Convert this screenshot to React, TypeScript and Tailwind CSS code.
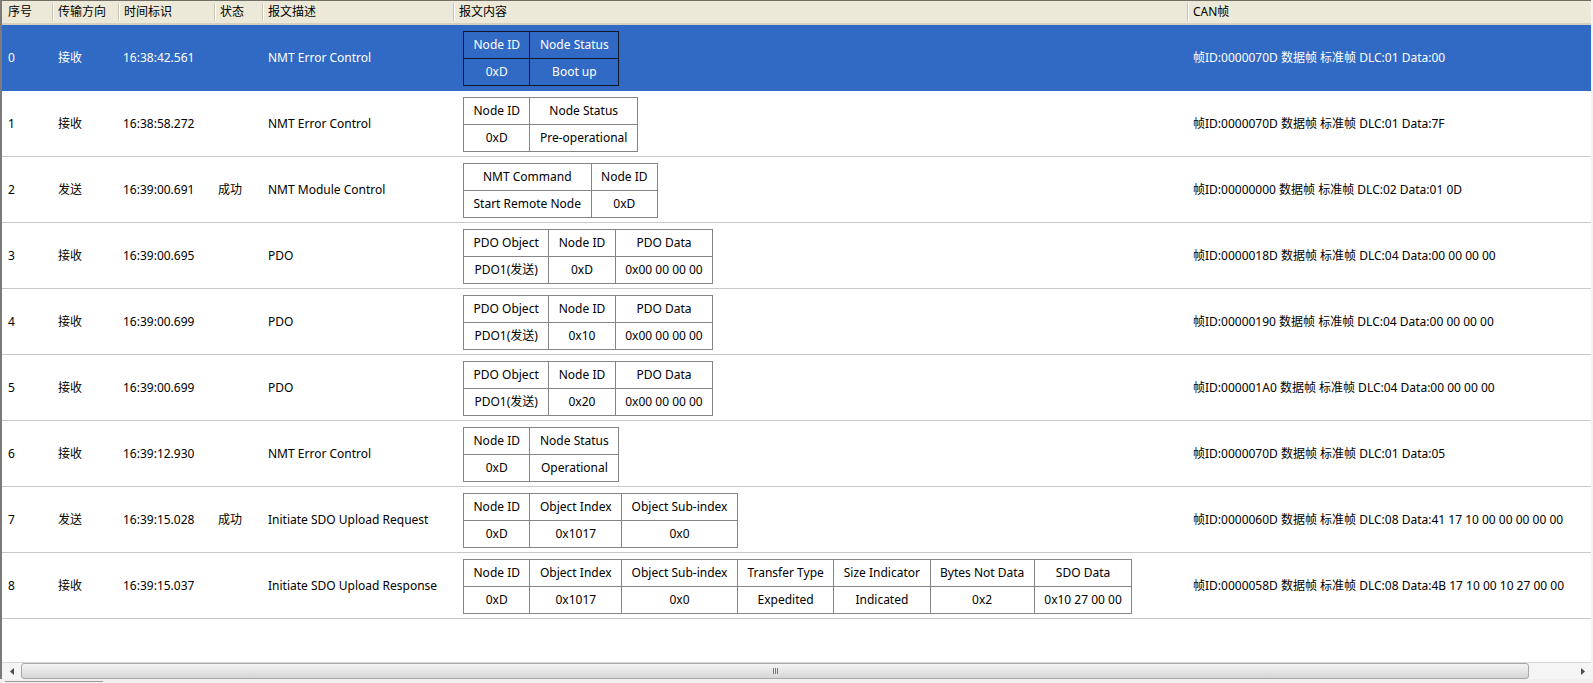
import clsx from 'clsx';

type Row = {
  id: string;
  dir: string;
  time: string;
  status: string;
  desc: string;
  head: string[];
  vals: string[];
  can: string;
};

const rows: Row[] = [
  { id: '0', dir: '接收', time: '16:38:42.561', status: '', desc: 'NMT Error Control', head: ['Node ID', 'Node Status'], vals: ['0xD', 'Boot up'], can: '帧ID:0000070D 数据帧 标准帧 DLC:01 Data:00' },
  { id: '1', dir: '接收', time: '16:38:58.272', status: '', desc: 'NMT Error Control', head: ['Node ID', 'Node Status'], vals: ['0xD', 'Pre-operational'], can: '帧ID:0000070D 数据帧 标准帧 DLC:01 Data:7F' },
  { id: '2', dir: '发送', time: '16:39:00.691', status: '成功', desc: 'NMT Module Control', head: ['NMT Command', 'Node ID'], vals: ['Start Remote Node', '0xD'], can: '帧ID:00000000 数据帧 标准帧 DLC:02 Data:01 0D' },
  { id: '3', dir: '接收', time: '16:39:00.695', status: '', desc: 'PDO', head: ['PDO Object', 'Node ID', 'PDO Data'], vals: ['PDO1(发送)', '0xD', '0x00 00 00 00'], can: '帧ID:0000018D 数据帧 标准帧 DLC:04 Data:00 00 00 00' },
  { id: '4', dir: '接收', time: '16:39:00.699', status: '', desc: 'PDO', head: ['PDO Object', 'Node ID', 'PDO Data'], vals: ['PDO1(发送)', '0x10', '0x00 00 00 00'], can: '帧ID:00000190 数据帧 标准帧 DLC:04 Data:00 00 00 00' },
  { id: '5', dir: '接收', time: '16:39:00.699', status: '', desc: 'PDO', head: ['PDO Object', 'Node ID', 'PDO Data'], vals: ['PDO1(发送)', '0x20', '0x00 00 00 00'], can: '帧ID:000001A0 数据帧 标准帧 DLC:04 Data:00 00 00 00' },
  { id: '6', dir: '接收', time: '16:39:12.930', status: '', desc: 'NMT Error Control', head: ['Node ID', 'Node Status'], vals: ['0xD', 'Operational'], can: '帧ID:0000070D 数据帧 标准帧 DLC:01 Data:05' },
  { id: '7', dir: '发送', time: '16:39:15.028', status: '成功', desc: 'Initiate SDO Upload Request', head: ['Node ID', 'Object Index', 'Object Sub-index'], vals: ['0xD', '0x1017', '0x0'], can: '帧ID:0000060D 数据帧 标准帧 DLC:08 Data:41 17 10 00 00 00 00 00' },
  {
    id: '8', dir: '接收', time: '16:39:15.037', status: '', desc: 'Initiate SDO Upload Response',
    head: ['Node ID', 'Object Index', 'Object Sub-index', 'Transfer Type', 'Size Indicator', 'Bytes Not Data', 'SDO Data'],
    vals: ['0xD', '0x1017', '0x0', 'Expedited', 'Indicated', '0x2', '0x10 27 00 00'],
    can: '帧ID:0000058D 数据帧 标准帧 DLC:08 Data:4B 17 10 00 10 27 00 00',
  },
];

const headers = ['序号', '传输方向', '时间标识', '状态', '报文描述', '报文内容', 'CAN帧'];

const cols = 'grid grid-cols-[50px_66px_96px_48px_191px_734px_1fr]';

function Detail({ head, vals, selected }: { head: string[]; vals: string[]; selected: boolean }) {
  const cell = clsx('px-[9.5px] flex items-center justify-center whitespace-nowrap', selected ? 'bg-[#316AC5]' : 'bg-white');
  return (
    <div
      className={clsx(
        'inline-grid grid-flow-col grid-rows-[26px_26px] auto-cols-max gap-px border',
        selected ? 'bg-[#101828] border-[#101828]' : 'bg-[#858585] border-[#858585]'
      )}
    >
      {head.map((h, i) => [
        <div key={`h${i}`} className={cell}>
          {h}
        </div>,
        <div key={`v${i}`} className={cell}>
          {vals[i]}
        </div>,
      ])}
    </div>
  );
}

export default function App() {
  return (
    <div className="w-[1593px] h-[683px] overflow-hidden bg-[#F0F0F0] flex flex-col font-['Noto_Sans','Noto_Sans_CJK_SC',sans-serif] text-[12px] text-black">
      <div className="flex-1 flex flex-col border-l-2 border-[#7A7A7A] border-r-2 border-r-[#F4F4F4] bg-white min-h-0">
        {/* header */}
        <div className={clsx(cols, 'h-[25px] shrink-0 bg-[#ECE9D8] border-t border-[#716F64] border-b-2 border-b-[#D4D0C0]')}>
          {headers.map((h, i) => (
            <div key={h} className="flex items-center min-w-0">
              {i > 0 && (
                <div className="flex h-[18px] shrink-0">
                  <div className="w-px bg-[#C7C5B2]" />
                  <div className="w-px bg-white" />
                </div>
              )}
              <span className={clsx('whitespace-nowrap', i > 0 ? 'pl-[4px]' : 'pl-[6px]')}>{h}</span>
            </div>
          ))}
        </div>

        {/* rows */}
        {rows.map((r, idx) => {
          const sel = idx === 0;
          return (
            <div
              key={r.id}
              className={clsx(
                cols,
                'h-[66px] shrink-0 border-b',
                sel ? 'bg-[#316AC5] text-white border-[#316AC5]' : 'border-[#C8C8C8]'
              )}
            >
              <div className="flex items-center pl-[6px]">{r.id}</div>
              <div className="flex items-center pl-[6px]">{r.dir}</div>
              <div className="flex items-center pl-[5px]">{r.time}</div>
              <div className="flex items-center pl-[4px]">{r.status}</div>
              <div className="flex items-center pl-[6px] whitespace-nowrap">{r.desc}</div>
              <div className="flex items-center pl-[10px] pt-[1px]">
                <Detail head={r.head} vals={r.vals} selected={sel} />
              </div>
              <div className="flex items-center pl-[6px] whitespace-nowrap overflow-hidden">{r.can}</div>
            </div>
          );
        })}

        <div className="flex-1" />

        {/* horizontal scrollbar */}
        <div className="h-[17px] shrink-0 flex bg-[#F5F5F5] border-t border-[#D8D8D8]">
          <div className="w-[19px] flex items-center justify-center">
            <svg width="4" height="7" viewBox="0 0 4 7">
              <path d="M4 0 L0 3.5 L4 7 Z" fill="#4A4A4A" />
            </svg>
          </div>
          <div className="w-[1508px] rounded-[3px] border border-[#A8A8A8] bg-gradient-to-b from-[#F4F4F4] to-[#D6D6D6] flex items-center justify-center">
            <div className="flex gap-[1px]">
              <div className="w-px h-[6px] bg-[#7A7A7A]" />
              <div className="w-px h-[6px] bg-[#7A7A7A]" />
              <div className="w-px h-[6px] bg-[#7A7A7A]" />
            </div>
          </div>
          <div className="flex-1 flex items-center justify-end pr-[6px]">
            <svg width="4" height="7" viewBox="0 0 4 7">
              <path d="M0 0 L4 3.5 L0 7 Z" fill="#4A4A4A" />
            </svg>
          </div>
        </div>
      </div>

      {/* bottom strip */}
      <div className="h-[4px] shrink-0 bg-[#F0F0F0] flex items-center">
        <div className="ml-[5px] w-[98px] h-px bg-[#9A9A9A]" />
      </div>
    </div>
  );
}
